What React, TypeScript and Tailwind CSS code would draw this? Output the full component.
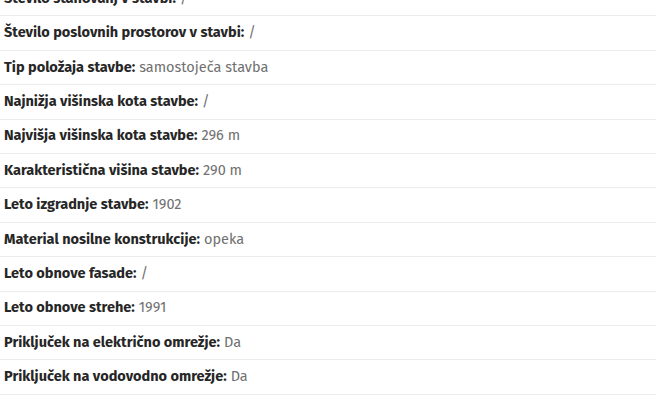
const rows: [string, string][] = [
  ["Število stanovanj v stavbi:", "/"],
  ["Število poslovnih prostorov v stavbi:", "/"],
  ["Tip položaja stavbe:", "samostoječa stavba"],
  ["Najnižja višinska kota stavbe:", "/"],
  ["Najvišja višinska kota stavbe:", "296 m"],
  ["Karakteristična višina stavbe:", "290 m"],
  ["Leto izgradnje stavbe:", "1902"],
  ["Material nosilne konstrukcije:", "opeka"],
  ["Leto obnove fasade:", "/"],
  ["Leto obnove strehe:", "1991"],
  ["Priključek na električno omrežje:", "Da"],
  ["Priključek na vodovodno omrežje:", "Da"],
];

export default function App() {
  return (
    <div className="h-[396px] w-[661px] overflow-hidden bg-white">
      <ul className="-mt-[18px] w-[656px] font-['Fira_Sans','Ubuntu','Lato',sans-serif] text-[14.5px]">
        {rows.map(([label, value]) => (
          <li
            key={label}
            className="flex h-[34.4px] items-center border-b border-[#ededed] pl-1"
          >
            <span className="font-bold text-[#262626]">{label}</span>
            <span className="ml-1 text-[#707070]">{value}</span>
          </li>
        ))}
      </ul>
    </div>
  );
}
